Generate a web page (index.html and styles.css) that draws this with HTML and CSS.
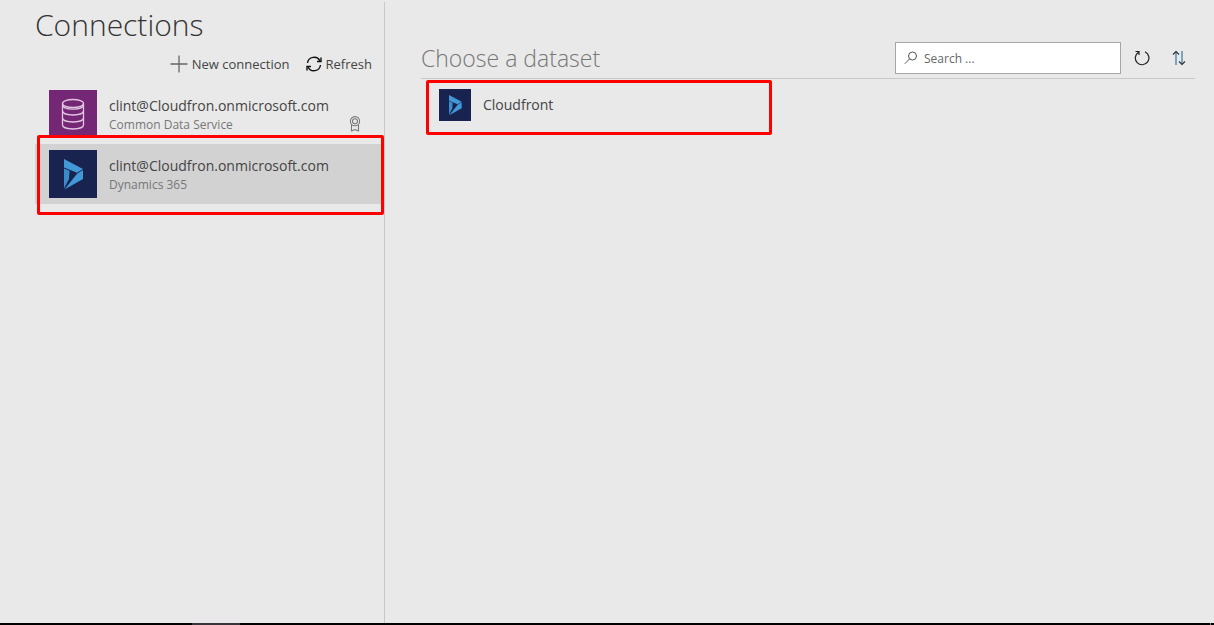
FILE: index.html
```html
<!DOCTYPE html>
<html lang="en">
<head>
    <meta charset="UTF-8">
    <meta name="viewport" content="width=device-width, initial-scale=1.0">
    <title>Connections</title>
    <link rel="stylesheet" href="styles.css">
</head>
<body>

    <!-- Dynamics 365 logo, used in both lists -->
    <svg class="defs" width="0" height="0" aria-hidden="true">
        <symbol id="dynamics" viewBox="0 0 48 48">
            <rect width="48" height="48" fill="#192350"/>
            <path d="M15 9L34 19L28 22.800L15 17.500Z" fill="#4199d8"/>
            <path d="M15 18.500L20.500 20.700L20 29L15 38.500Z" fill="#3a8cca"/>
            <path d="M34 20V29L15.500 39.500L28 23.800Z" fill="#4199d8"/>
        </symbol>
    </svg>

    <div class="app">
        <aside class="connections">
            <h1>Connections</h1>
            <div class="toolbar">
                <button class="tool" type="button">
                    <svg width="18" height="18" viewBox="0 0 18 18"><path d="M9 0.500V17.500M0.500 9H17.500" fill="none" stroke="#666" stroke-width="1.300"/></svg>
                    New connection
                </button>
                <button class="tool" type="button">
                    <svg width="16" height="16" viewBox="0 0 16 16" fill="none" stroke="#111" stroke-width="1.400">
                        <path d="M1.500 7A6.600 6.600 0 0 1 14 5M14.500 9A6.600 6.600 0 0 1 2 11"/>
                        <path d="M15 1.500V5.500H11M1 14.500V10.500H5"/>
                    </svg>
                    Refresh
                </button>
            </div>
            <ul class="list">
                <li class="connection">
                    <svg class="logo" viewBox="0 0 48 48">
                        <rect width="48" height="48" fill="#742774"/>
                        <g fill="none" stroke="#e3c6e3" stroke-width="1.300">
                            <ellipse cx="24" cy="13.500" rx="10.500" ry="4"/>
                            <path d="M13.500 13.500V35C13.500 40.300 34.500 40.300 34.500 35V13.500"/>
                            <path d="M13.500 15C13.500 20.500 34.500 20.500 34.500 15M13.500 21C13.500 26.300 34.500 26.300 34.500 21M13.500 28C13.500 33.300 34.500 33.300 34.500 28"/>
                        </g>
                    </svg>
                    <div class="info">
                        <span class="name">clint@Cloudfron.onmicrosoft.com</span>
                        <span class="type">Common Data Service</span>
                    </div>
                    <svg class="premium" width="12" height="16" viewBox="0 0 12 16" fill="none" stroke="#777" stroke-width="1.100">
                        <circle cx="6" cy="5.200" r="4.600"/>
                        <circle cx="6" cy="5.200" r="2.500"/>
                        <path d="M2.500 8.500V15.500M9.500 15.500V8.500M2.500 15L6 13.500L9.500 15"/>
                    </svg>
                </li>
                <li class="connection selected">
                    <svg class="logo"><use href="#dynamics"/></svg>
                    <div class="info">
                        <span class="name">clint@Cloudfron.onmicrosoft.com</span>
                        <span class="type">Dynamics 365</span>
                    </div>
                    <span class="mark"></span>
                </li>
            </ul>
        </aside>

        <main class="datasets">
            <div class="heading">
                <h2>Choose a dataset</h2>
                <div class="search">
                    <svg width="14" height="14" viewBox="0 0 14 14" fill="none" stroke="#555"><circle cx="8.500" cy="5" r="4"/><path d="M5.700 7.800L0.800 12.700"/></svg>
                    <input type="text" placeholder="Search ..." aria-label="Search">
                </div>
                <button class="icon" type="button" aria-label="Refresh">
                    <svg width="16" height="16" viewBox="0 0 16 16" fill="none" stroke="#222" stroke-width="1.200"><path d="M11 1.800A6.800 6.800 0 1 1 4.500 2.200M1.500 1.500H5V5"/></svg>
                </button>
                <button class="icon" type="button" aria-label="Sort">
                    <svg width="14" height="16" viewBox="0 0 14 16" fill="none" stroke-width="1.200">
                        <path d="M4 15V1.500M10 1V14.500" stroke="#3477a8"/>
                        <path d="M1 4.500L4 1.500L7 4.500M7 11.500L10 14.500L13 11.500" stroke="#333"/>
                    </svg>
                </button>
            </div>
            <ul class="list">
                <li class="dataset">
                    <svg class="logo small"><use href="#dynamics"/></svg>
                    <span class="name">Cloudfront</span>
                    <span class="mark"></span>
                </li>
            </ul>
        </main>
    </div>

    <footer class="taskbar"><span class="task"></span><span class="edge"></span></footer>

</body>
</html>
```

FILE: styles.css
```css
* { box-sizing: border-box; }
body { font-family: "Open Sans", "Noto Sans", sans-serif; background: #e9e9e9; color: #444; margin: 0; min-height: 100vh; display: flex; flex-direction: column; }
h1, h2 { margin: 0; font-weight: 300; white-space: nowrap; }
button { background: none; border: none; padding: 0; font-family: inherit; color: inherit; cursor: pointer; }
svg { flex: none; display: block; }
.defs { position: absolute; }
.list { list-style: none; margin: 0; padding: 0; }
.app { flex: 1; display: flex; padding-top: 2px; }

.connections { width: 385px; flex: none; padding-left: 35px; border-right: 1px solid #c8c8c8; }
h1 { font-size: 30px; line-height: 46px; color: #333; }
.toolbar { display: flex; justify-content: flex-end; gap: 16px; height: 36px; padding: 4px 12px 0 0; }
.tool { display: flex; align-items: center; gap: 4px; height: 24px; font-size: 13px; }
.connection { position: relative; display: flex; height: 60px; padding: 6px 23px 6px 14px; }
.selected { background: #d2d2d2; }
.logo { width: 48px; height: 48px; }
.info { flex: 1; display: flex; flex-direction: column; padding: 6px 0 0 12px; }
.name { font-size: 14px; line-height: 20px; }
.type { font-size: 12px; line-height: 18px; color: #777; }
.premium { align-self: flex-end; margin-bottom: 6px; }

.datasets { flex: 1; padding: 32px 19px 0 36px; }
.heading { display: flex; align-items: center; height: 45px; padding-top: 4px; border-bottom: 1px solid #c8c8c8; }
h2 { flex: 1; font-size: 23px; line-height: 32px; color: #777; }
.search { display: flex; align-items: center; gap: 6px; width: 226px; height: 32px; padding-left: 8px; background: #fff; border: 1px solid #a6a6a6; }
.search input { flex: 1; min-width: 0; padding: 0; border: none; outline: none; font-family: inherit; font-size: 12px; color: #444; }
.search input::placeholder { color: #666; opacity: 1; }
.icon { display: flex; justify-content: center; width: 16px; margin-left: 13px; }
.icon + .icon { margin-left: 21px; margin-right: 8px; }
.dataset { position: relative; display: flex; align-items: center; gap: 12px; height: 52px; padding-left: 18px; }
.small { width: 32px; height: 32px; }

/* red callout frames */
.mark { position: absolute; border: 3px solid #f00; border-radius: 2px; }
.connection .mark { top: -9px; right: 0; bottom: -11px; left: 2px; }
.dataset .mark { top: 1px; left: 5px; width: 346px; height: 55px; }

.taskbar { display: flex; justify-content: space-between; height: 2px; padding: 0 3px 0 192px; background: #000; }
.task { width: 48px; background: #3a343a; }
.edge { width: 1px; background: #777; }
```
